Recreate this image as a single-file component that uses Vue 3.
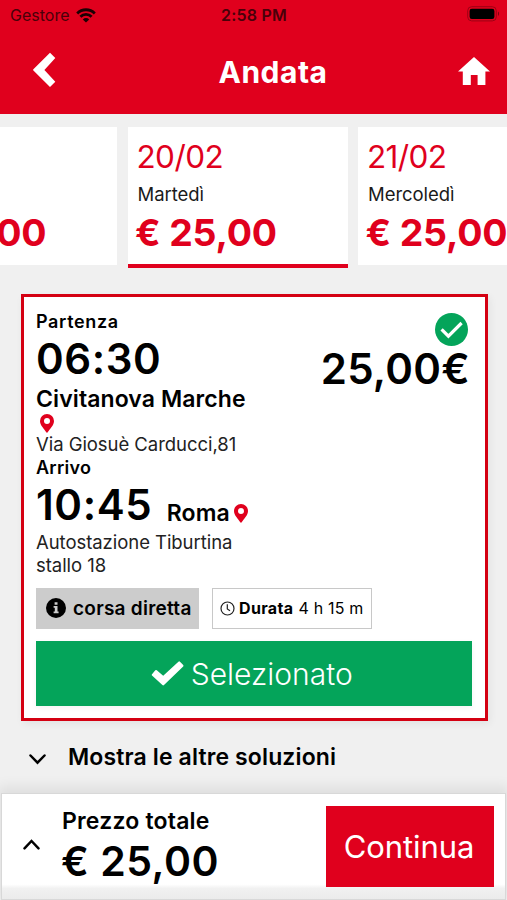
<script setup>
import { ref } from 'vue';

const days = [
    { id: 19, date: '', name: '', price: '€ 25,00' },
    { id: 20, date: '20/02', name: 'Martedì', price: '€ 25,00' },
    { id: 21, date: '21/02', name: 'Mercoledì', price: '€ 25,00' }
];
const selectedDay = ref(20);

const trip = {
    departure: { time: '06:30', city: 'Civitanova Marche', address: 'Via Giosuè Carducci,81' },
    arrival: { time: '10:45', city: 'Roma', address: ['Autostazione Tiburtina', 'stallo 18'] },
    price: '25,00€',
    duration: '4 h 15 m'
};
</script>

<template>
    <div class="screen">
        <header class="top">
            <div class="status">
                <div class="carrier">
                    <span>Gestore</span>
                    <svg class="wifi" width="20" height="15" viewBox="0 0 20 15">
                        <g fill="none" stroke="currentColor" stroke-width="2.8">
                            <path d="M1.2 5.4A12.4 12.4 0 0 1 18.8 5.4" />
                            <path d="M4.4 8.8A7.8 7.8 0 0 1 15.6 8.8" />
                        </g>
                        <path d="M10 14.6L6.8 11.4A4.6 4.6 0 0 1 13.2 11.4Z" fill="currentColor" />
                    </svg>
                </div>
                <span class="clock">2:58 PM</span>
                <svg class="battery" width="33" height="16" viewBox="0 0 33 16">
                    <rect x=".7" y=".7" width="28.6" height="14.2" rx="4" fill="none" stroke="#9d0014" stroke-width="1" />
                    <rect x="2.6" y="2.7" width="24.8" height="10.2" rx="2.2" fill="#000" />
                    <path d="M31 5.6c1.4.6 1.4 3.8 0 4.4z" fill="#7d0010" />
                </svg>
            </div>
            <nav class="nav">
                <button class="icon-btn back">
                    <svg width="24" height="36" viewBox="0 0 24 36">
                        <path d="M17 0.8L22.3 6.1L11.4 17.9L22.3 29.7L17 35L.4 18.6Q-.2 17.9 .4 17.2Z" fill="#fff" />
                    </svg>
                </button>
                <h1>Andata</h1>
                <button class="icon-btn">
                    <svg width="32" height="28" viewBox="0 0 32 28">
                        <path d="M16 0L32 14.6H27.4V28H19.6V18H12.8V28H4.8V14.6H0Z" fill="#fff" />
                    </svg>
                </button>
            </nav>
        </header>

        <div class="days">
            <button v-for="day in days" :key="day.id" @click="selectedDay = day.id"
                :class="['day', { 'selected': selectedDay === day.id }]">
                <span class="day-date">{{ day.date }}</span>
                <span class="day-name">{{ day.name }}</span>
                <span class="day-price">{{ day.price }}</span>
            </button>
        </div>

        <section class="ticket">
            <div class="ticket-main">
                <div class="route">
                    <div class="label">Partenza</div>
                    <div class="time first">{{ trip.departure.time }}</div>
                    <div class="city">{{ trip.departure.city }}</div>
                    <div class="pin-row">
                        <svg class="pin" width="14" height="19" viewBox="0 0 14 19">
                            <path fill-rule="evenodd" d="M7 0a7 7 0 0 1 7 7c0 4-3.600 7.600-7 12C3.600 14.600 0 11 0 7a7 7 0 0 1 7-7zM7 3.900a3 3 0 1 0 0 6 3 3 0 0 0 0-6z" fill="#e0001d" />
                        </svg>
                    </div>
                    <div class="address">{{ trip.departure.address }}</div>
                    <div class="label arrival">Arrivo</div>
                    <div class="arrival-row">
                        <span class="time second">{{ trip.arrival.time }}</span>
                        <span class="city roma">{{ trip.arrival.city }}</span>
                        <svg class="pin" width="14" height="19" viewBox="0 0 14 19">
                            <path fill-rule="evenodd" d="M7 0a7 7 0 0 1 7 7c0 4-3.600 7.600-7 12C3.600 14.600 0 11 0 7a7 7 0 0 1 7-7zM7 3.900a3 3 0 1 0 0 6 3 3 0 0 0 0-6z" fill="#e0001d" />
                        </svg>
                    </div>
                    <div v-for="line in trip.arrival.address" :key="line" class="address">{{ line }}</div>
                </div>
                <div class="summary">
                    <svg width="33" height="33" viewBox="0 0 33 33">
                        <circle cx="16.500" cy="16.500" r="16.500" fill="#04a45a" />
                        <path d="M6.600 16.300L13.400 23.200L26.600 10" fill="none" stroke="#fff" stroke-width="3.200" />
                    </svg>
                    <span class="ticket-price">{{ trip.price }}</span>
                </div>
            </div>
            <div class="badges">
                <div class="badge direct">
                    <svg width="20" height="20" viewBox="0 0 20 20">
                        <circle cx="10" cy="10" r="10" fill="#000" />
                        <path d="M8.600 4.200h2.900v2.500H8.600zM7.600 8.100h3.900v5.400h1.100v1.700H7.600v-1.700h1.200V9.800H7.600z" fill="#ccc" />
                    </svg>
                    <span>corsa diretta</span>
                </div>
                <div class="badge duration">
                    <svg width="15" height="15" viewBox="0 0 15 15" fill="none" stroke="#222" stroke-width="1.200">
                        <circle cx="7.500" cy="7.500" r="6.500" />
                        <path d="M7.300 3.200V8L10 9.800" />
                    </svg>
                    <b>Durata</b>
                    <span>{{ trip.duration }}</span>
                </div>
            </div>
            <button class="select-btn">
                <svg width="33" height="25" viewBox="0 0 33 25">
                    <path d="M1 13.200L4.300 9.300Q5 8.600 5.800 9.300L12.200 14.800L27.400.7Q28.200 0 29 .7L32.200 4Q32.800 4.700 32.200 5.400L13 24.100Q12.200 24.800 11.400 24.100L1 14.600Q.3 13.900 1 13.200Z" fill="#fff" />
                </svg>
                <span>Selezionato</span>
            </button>
        </section>

        <button class="more">
            <svg width="17" height="11" viewBox="0 0 17 11">
                <path d="M1.500 1.500L8.500 8.700L15.500 1.500" fill="none" stroke="#000" stroke-width="2.500" stroke-linecap="round" />
            </svg>
            <span>Mostra le altre soluzioni</span>
        </button>

        <footer class="total">
            <svg class="expand" width="17" height="11" viewBox="0 0 17 11">
                <path d="M1.500 9.300L8.500 2L15.500 9.300" fill="none" stroke="#000" stroke-width="2.500" stroke-linecap="round" />
            </svg>
            <div class="total-text">
                <span class="total-label">Prezzo totale</span>
                <span class="total-price">€ 25,00</span>
            </div>
            <button class="continue">Continua</button>
        </footer>
    </div>
</template>

<style>
body {
    margin: 0;
    background: #f0f0f0;
}
</style>

<style scoped>
.screen {
    width: 507px;
    height: 900px;
    overflow: hidden;
    display: flex;
    flex-direction: column;
    background: #f0f0f0;
    color: #000;
    font-family: Inter, "Liberation Sans", sans-serif;
    white-space: nowrap;
}

button {
    border: 0;
    padding: 0;
    margin: 0;
    background: none;
    color: inherit;
    font: inherit;
    letter-spacing: inherit;
    cursor: pointer;
}

svg {
    display: block;
    flex: none;
}

.top {
    flex: none;
    height: 114px;
    background: #e0001d;
}

.status {
    display: grid;
    grid-template-columns: 1fr auto 1fr;
    align-items: center;
    height: 30px;
    padding: 0 7px 0 10px;
    font-size: 16px;
    line-height: 30px;
    color: #4a0009;
}

.carrier {
    display: flex;
    align-items: center;
    gap: 7px;
}

.wifi {
    color: #1c0003;
}

.clock {
    margin-left: -2px;
    font-weight: 600;
    letter-spacing: 0.2px;
}

.battery {
    justify-self: end;
    margin-top: -2px;
}

.nav {
    display: flex;
    align-items: center;
    justify-content: space-between;
    height: 82px;
    padding: 0 17px 0 33px;
}

.nav .back {
    margin-top: -3px;
}

.nav h1 {
    margin: 1px 0 0 31px;
    font-size: 30px;
    font-weight: 700;
    letter-spacing: 0.5px;
    color: #fff;
}

.days {
    flex: none;
    display: flex;
    align-items: flex-start;
    gap: 10.500px;
    margin: 13px 0 0 -103px;
}

.day {
    flex: none;
    display: flex;
    flex-direction: column;
    align-items: flex-start;
    box-sizing: border-box;
    width: 220px;
    height: 137.500px;
    padding: 10px 0 0 9px;
    background: #fff;
    text-align: left;
}

.day.selected {
    height: 141px;
    border-bottom: 4px solid #e0001d;
}

.day-date {
    height: 40px;
    font-size: 31.500px;
    font-weight: 400;
    line-height: 40px;
    letter-spacing: -0.6px;
    color: #e0001d;
}

.day-name {
    height: 34px;
    padding-left: 1px;
    font-size: 18.500px;
    line-height: 34px;
    letter-spacing: -0.05px;
    color: #1a1a1a;
}

.day-price {
    margin-left: -1.500px;
    font-size: 37.500px;
    font-weight: 700;
    line-height: 43px;
    letter-spacing: -0.2px;
    color: #e0001d;
}

.ticket {
    flex: none;
    box-sizing: border-box;
    width: 467px;
    height: 427px;
    margin: 26px 0 0 20.500px;
    padding: 0 12px 0 12.500px;
    border: 3px solid #d40012;
    background: #fff;
    box-shadow: 2px 3px 8px rgba(0, 0, 0, 0.06);
}

.ticket-main {
    display: flex;
    justify-content: space-between;
    height: 291px;
}

.label {
    font-size: 18px;
    font-weight: 600;
    line-height: 24px;
    letter-spacing: 0.65px;
    padding-top: 13px;
}

.label.arrival {
    padding-top: 0;
    letter-spacing: 0.25px;
}

.time {
    font-size: 42px;
    font-weight: 600;
    line-height: 50px;
    letter-spacing: 0.6px;
}

.city {
    font-size: 23px;
    font-weight: 600;
    line-height: 30px;
    letter-spacing: 0.1px;
}

.pin-row {
    height: 19px;
    padding-left: 4px;
}

.address {
    font-size: 18.500px;
    line-height: 23px;
    letter-spacing: -0.05px;
    color: #222;
}

.arrival-row {
    display: flex;
    align-items: center;
    height: 51px;
}

.arrival-row .time {
    margin-top: -2px;
}

.roma {
    margin: 14px 4.500px 0 14.500px;
}

.arrival-row .pin {
    margin-top: 16px;
}

.summary {
    display: flex;
    flex-direction: column;
    align-items: flex-end;
    padding: 15.500px 4.500px 0 0;
}

.ticket-price {
    margin-right: -2px;
    font-size: 42px;
    font-weight: 600;
    line-height: 46px;
    letter-spacing: 0.25px;
}

.badges {
    display: flex;
    gap: 12.500px;
    height: 40.500px;
}

.badge {
    display: flex;
    align-items: center;
    box-sizing: border-box;
}

.direct {
    width: 163px;
    padding-left: 10px;
    gap: 7px;
    background: #ccc;
    font-size: 19px;
    font-weight: 600;
    letter-spacing: 0.25px;
}

.duration {
    width: 160.500px;
    padding-left: 7px;
    border: 1.500px solid #c8c8c8;
    font-size: 16px;
    letter-spacing: 0.2px;
}

.duration b {
    margin: 0 5px 0 4.500px;
    letter-spacing: 0.35px;
}

.select-btn {
    display: flex;
    align-items: center;
    justify-content: center;
    gap: 6.500px;
    width: 436px;
    height: 65px;
    margin-top: 12.500px;
    padding-right: 4px;
    box-sizing: border-box;
    background: #04a45a;
    color: #fff;
    font-size: 30px;
    font-weight: 300;
    box-shadow: 0 2px 6px rgba(0, 0, 0, 0.05);
}

.select-btn svg {
    margin-top: -1px;
}

.more {
    flex: none;
    display: flex;
    align-items: center;
    gap: 22px;
    height: 72px;
    padding-left: 29px;
    font-size: 23px;
    font-weight: 600;
    letter-spacing: 0.13px;
}

.more svg {
    margin-top: 4px;
}

.total {
    flex: none;
    display: flex;
    align-items: flex-start;
    box-sizing: border-box;
    height: 107px;
    margin: 0 1px;
    border: 1px solid #d8d8d8;
    background: linear-gradient(#fff 86%, #f1f1f1 90%, #ebebeb);
    box-shadow: 0 -4px 12px 3px rgba(0, 0, 0, 0.07);
}

.expand {
    margin: 45px 22px 0 21px;
}

.total-text {
    display: flex;
    flex-direction: column;
    flex: 1;
    padding-top: 12px;
}

.total-label {
    font-size: 23px;
    font-weight: 600;
    line-height: 30px;
    letter-spacing: 0.2px;
}

.total-price {
    margin-left: -1px;
    font-size: 41px;
    font-weight: 600;
    line-height: 50px;
    letter-spacing: 0.5px;
}

.continue {
    width: 168px;
    height: 81px;
    margin: 11.500px 11.500px 0 0;
    padding-right: 1px;
    background: #e0001d;
    color: #fff;
    font-size: 31px;
    letter-spacing: -0.1px;
}
</style>
